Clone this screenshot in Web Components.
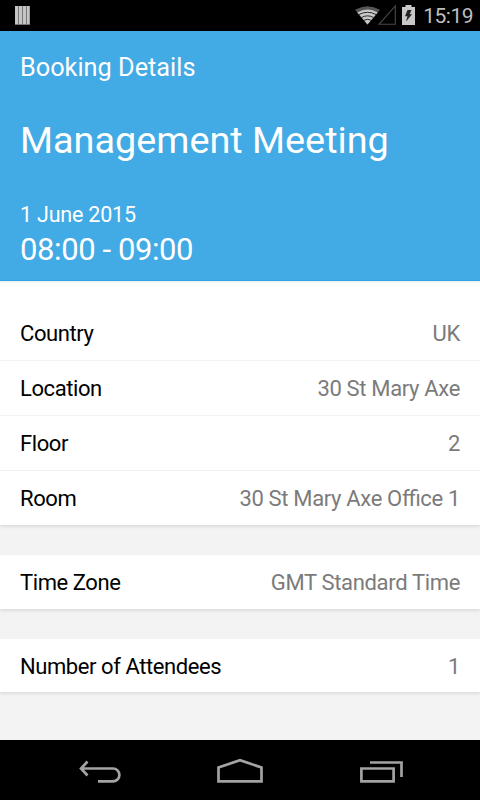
<!DOCTYPE html>
<html lang="en">
<head>
<meta charset="utf-8">
<title>Booking Details</title>
<style>
	html, body { margin: 0; height: 100%; }
	body { font-family: Roboto, "Liberation Sans", sans-serif; overflow: hidden; }
</style>
</head>
<body>
<booking-screen>
	<status-bar slot="top" time="15:19"></status-bar>
	<booking-header>
		Booking Details
		<span slot="title">Management Meeting</span>
		<span slot="date">1 June 2015</span>
		<span slot="time">08:00 - 09:00</span>
	</booking-header>
	<detail-group first>
		<detail-row label="Country">UK</detail-row>
		<detail-row label="Location">30 St Mary Axe</detail-row>
		<detail-row label="Floor">2</detail-row>
		<detail-row label="Room">30 St Mary Axe Office 1</detail-row>
	</detail-group>
	<detail-group>
		<detail-row label="Time Zone">GMT Standard Time</detail-row>
	</detail-group>
	<detail-group last>
		<detail-row label="Number of Attendees">1</detail-row>
	</detail-group>
	<nav-bar slot="bottom"></nav-bar>
</booking-screen>

<script>
class BookingScreen extends HTMLElement {
	constructor() {
		super();
		this.attachShadow({mode:'open'});
		this.shadowRoot.innerHTML = `
		  <style>
		    :host {
		    	display: flex;
		    	flex-direction: column;
		    	height: 800px;
		    	background: #f3f3f3;
		    }
		    main { flex: 1; }
		  </style>
		  <slot name="top"></slot>
		  <main><slot></slot></main>
		  <slot name="bottom"></slot>
		`;
	}
}

class StatusBar extends HTMLElement {
	constructor() {
		super();
		this.attachShadow({mode:'open'});
		this.shadowRoot.innerHTML = `
		  <style>
		    :host {
		    	display: flex;
		    	align-items: center;
		    	height: 31px;
		    	padding: 0 7px 0 15px;
		    	background: #000;
		    	color: #bebebe;
		    }
		    svg { display: block; }
		    .wifi { margin-left: auto; }
		    .battery { margin: 0 8px 0 1px; }
		    span { font-size: 21px; line-height: 32px; letter-spacing: -0.5px; padding-top: 1px; }
		  </style>
		  <svg width="15" height="31" viewBox="0 0 15 31">
		    <path d="M0 6h15v19H0z" fill="#777"/>
		    <path d="M0 6h3v18H0zM4 6h3v18H4zM8 6h3v18H8zM12 6h2.5v18H12z" fill="#c4c4c4"/>
		  </svg>
		  <svg class="wifi" width="46" height="31" viewBox="355 0 46 31">
		    <path d="M367.5 24.5L355 9.8Q367.5 2.5 380 9.8z" fill="#555"/>
		    <path d="M367.5 24.5L357.3 12.5Q367.5 6.5 377.7 12.5z" fill="#c8c8c8"/>
		    <path d="M359 14.5Q367.5 10 376 14.5M361.5 17.5Q367.5 14.2 373.5 17.5M363.8 20.3Q367.5 18.3 371.2 20.3" fill="none" stroke="#000" stroke-width=".8"/>
		    <path d="M379 24.3L395.3 6v18.3z" fill="none" stroke="#494949" stroke-width="1.1"/>
		  </svg>
		  <svg class="battery" width="13" height="31" viewBox="402 0 13 31">
		    <path d="M405.5 5h6v2h3.5v18h-13V7h3.5z" fill="#c8c8c8"/>
		    <path d="M407.5 10h4l-1.8 4.2h2.4L406 21.5l1.5-5.2h-2.5z" fill="#222"/>
		  </svg>
		  <span></span>
		`;
	}
	connectedCallback() {
		this.shadowRoot.querySelector('span').textContent = this.getAttribute('time');
	}
}

class BookingHeader extends HTMLElement {
	constructor() {
		super();
		this.attachShadow({mode:'open'});
		this.shadowRoot.innerHTML = `
		  <style>
		    :host {
		    	display: block;
		    	box-sizing: border-box;
		    	height: 250px;
		    	padding: 17px 20px 0;
		    	background: #42aae4;
		    	border-bottom: 1px solid #28a5e3;
		    	color: #fff;
		    }
		    div { white-space: nowrap; }
		    .heading { font-size: 25.3px; line-height: 40px; }
		    .title { font-size: 37.8px; line-height: 50px; margin-top: 27px; }
		    .date { font-size: 21.5px; line-height: 28px; margin-top: 36px; letter-spacing: -0.2px; }
		    .time { font-size: 31px; line-height: 42px; letter-spacing: -0.4px; }
		  </style>
		  <div class="heading"><slot></slot></div>
		  <div class="title"><slot name="title"></slot></div>
		  <div class="date"><slot name="date"></slot></div>
		  <div class="time"><slot name="time"></slot></div>
		`;
	}
}

class DetailGroup extends HTMLElement {
	constructor() {
		super();
		this.attachShadow({mode:'open'});
		this.shadowRoot.innerHTML = `
		  <style>
		    :host {
		    	display: grid;
		    	gap: 1px;
		    	margin-bottom: 30px;
		    	background: #fff;
		    	box-shadow: 0 2px 3px rgba(0, 0, 0, 0.09);
		    }
		    :host([first]) {
		    	padding-top: 25px;
		    	box-shadow: 0 2px 3px rgba(0, 0, 0, 0.09), inset 0 3px 2px -1px #f3f3f3;
		    }
		    :host([last]) { --row-height: 53px; }
		    ::slotted(detail-row:not(:last-child)) {
		    	box-shadow: 0 1px #f2f2f2;
		    }
		  </style>
		  <slot></slot>
		`;
	}
}

class DetailRow extends HTMLElement {
	constructor() {
		super();
		this.attachShadow({mode:'open'});
		this.shadowRoot.innerHTML = `
		  <style>
		    :host {
		    	display: flex;
		    	justify-content: space-between;
		    	align-items: center;
		    	box-sizing: border-box;
		    	height: var(--row-height, 54px);
		    	padding: 2px 20px 0;
		    	font-size: 22px;
		    	line-height: 52px;
		    	white-space: nowrap;
		    	font-feature-settings: "liga" 1;
		    }
		    .label { color: #000; letter-spacing: -0.42px; }
		    .value { color: #7b7b7b; letter-spacing: -0.34px; }
		  </style>
		  <span class="label"></span>
		  <span class="value"><slot></slot></span>
		`;
	}
	connectedCallback() {
		this.shadowRoot.querySelector('.label').textContent = this.getAttribute('label');
	}
}

class NavBar extends HTMLElement {
	constructor() {
		super();
		this.attachShadow({mode:'open'});
		this.shadowRoot.innerHTML = `
		  <style>
		    :host {
		    	display: flex;
		    	justify-content: center;
		    	gap: 92px;
		    	height: 60px;
		    	background: #000;
		    }
		    svg { display: block; fill: none; stroke: #a3a3a3; stroke-width: 2.7; }
		  </style>
		  <svg width="48" height="60" viewBox="76 740 48 60">
		    <path d="M81 768.5h32a6.4 6.4 0 0 1 0 12.8H98M87.5 761.5l-6.5 7 6.5 7"/>
		  </svg>
		  <svg width="48" height="60" viewBox="216 740 48 60">
		    <path d="M218.5 781.3v-13.8l21.5-7.3 21.5 7.3v13.8z"/>
		  </svg>
		  <svg width="48" height="60" viewBox="356 740 48 60">
		    <path d="M361.4 768.5h32.2v12.8h-32.2zM370 762.5h31.5V777"/>
		  </svg>
		`;
	}
}

customElements.define('booking-screen',BookingScreen);
customElements.define('status-bar',StatusBar);
customElements.define('booking-header',BookingHeader);
customElements.define('detail-group',DetailGroup);
customElements.define('detail-row',DetailRow);
customElements.define('nav-bar',NavBar);
</script>
</body>
</html>
